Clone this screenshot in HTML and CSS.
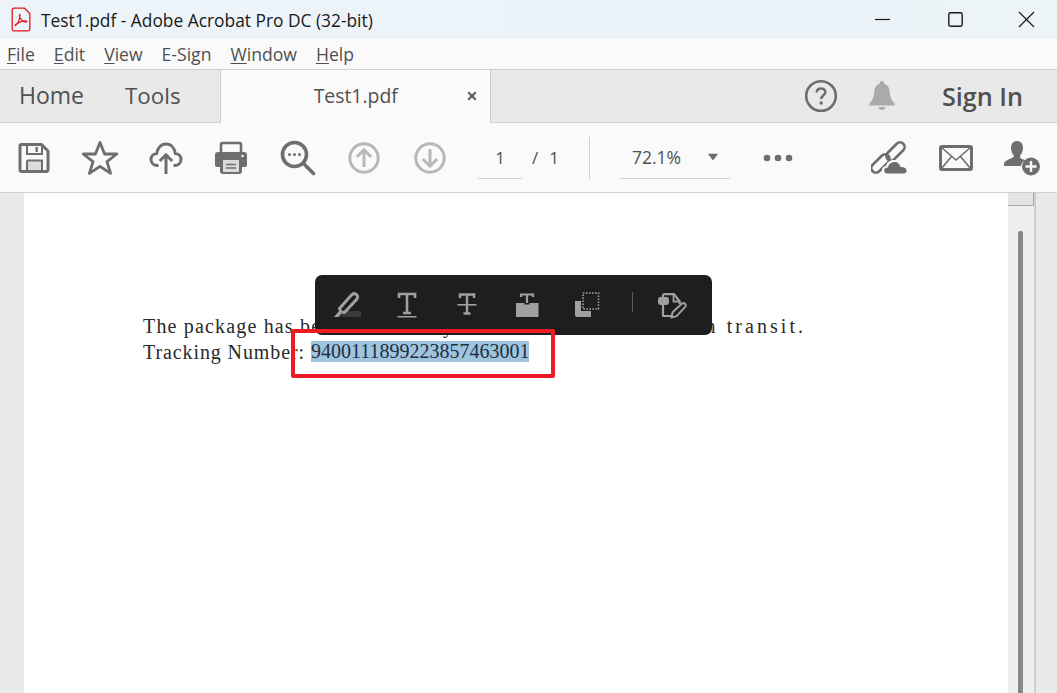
FILE: index.html
```html
<!DOCTYPE html>
<html lang="en">
<head>
<meta charset="utf-8">
<title>Test1.pdf - Adobe Acrobat Pro DC (32-bit)</title>
<link rel="stylesheet" href="styles.css">
</head>
<body>
<div class="app">
  <header class="titlebar">
    <svg class="pdf-icon" width="20" height="25" viewBox="0 0 20 25" fill="none" stroke="#e8141c">
      <path d="M3 1.2H13.5L18.8 6.5V22a1.8 1.8 0 0 1-1.8 1.8H3A1.8 1.8 0 0 1 1.2 22V3A1.8 1.8 0 0 1 3 1.2Z" stroke-width="1.3"/>
      <path d="M4.5 18.5C6.5 17 8.5 13 9 8.5C9.2 7 8.6 7 8.4 8.5C8.2 11 12 15.5 15.5 15C16.5 14.6 15.5 13.8 14 13.9C11 14.1 7.5 15.5 4.8 17.3C4 18 4.2 18.9 4.5 18.5Z" stroke-width="1.2"/>
    </svg>
    <span class="title">Test1.pdf - Adobe Acrobat Pro DC (32-bit)</span>
    <div class="winctl">
      <svg width="17" height="17" viewBox="0 0 17 17" class="w-min"><path d="M1 8.5H16" stroke="#1a1a1a" stroke-width="1.2"/></svg>
      <svg width="17" height="17" viewBox="0 0 17 17" class="w-max"><rect x="1.8" y="1.8" width="13.4" height="13.4" rx="1.6" fill="none" stroke="#1a1a1a" stroke-width="1.4"/></svg>
      <svg width="17" height="17" viewBox="0 0 17 17" class="w-close"><path d="M1 1L16 16M16 1L1 16" stroke="#1a1a1a" stroke-width="1.2"/></svg>
    </div>
  </header>

  <nav class="menubar">
    <span><u>F</u>ile</span>
    <span><u>E</u>dit</span>
    <span><u>V</u>iew</span>
    <span>E-Sign</span>
    <span><u>W</u>indow</span>
    <span><u>H</u>elp</span>
  </nav>

  <div class="tabbar">
    <span class="tab-link tab-home">Home</span>
    <span class="tab-link tab-tools">Tools</span>
    <div class="tab-active">
      <span class="tab-name">Test1.pdf</span>
      <svg class="tab-x" width="10" height="10" viewBox="0 0 10 10"><path d="M1.2 1.2L8.8 8.8M8.8 1.2L1.2 8.8" stroke="#555" stroke-width="2"/></svg>
    </div>
    <div class="tab-right">
      <svg width="34" height="34" viewBox="0 0 34 34" class="help">
        <circle cx="17" cy="17" r="14.8" fill="none" stroke="#6e6e6e" stroke-width="2.6"/>
        <path d="M12.6 13.4C12.8 10.6 14.8 9.4 17 9.4C19.6 9.4 21.4 11 21.4 13.2C21.4 16.2 17.2 16.4 17.2 20" fill="none" stroke="#6e6e6e" stroke-width="2.5"/>
        <circle cx="17.2" cy="24" r="1.7" fill="#6e6e6e"/>
      </svg>
      <svg width="28" height="32" viewBox="0 0 28 32" class="bell">
        <path d="M14 1C15.6 1 16.4 2.2 16.2 3.8C20.2 5 21.6 8.4 21.8 12.5C22 17.5 23.6 20.5 26.6 23.5V25.4H1.4V23.5C4.4 20.5 6 17.5 6.2 12.5C6.4 8.4 7.8 5 11.8 3.8C11.6 2.2 12.4 1 14 1Z" fill="#aaa"/>
        <path d="M10.5 27H17.5C17.2 29 15.8 30 14 30C12.2 30 10.8 29 10.5 27Z" fill="#aaa"/>
      </svg>
      <span class="signin">Sign In</span>
    </div>
  </div>

  <div class="toolbar">
    <div class="tool-group">
      <span class="tool"><svg width="32" height="32" viewBox="0 0 32 32">
        <path d="M3 2.5H23.5L30 9V28a1.5 1.5 0 0 1-1.5 1.5H3.5A1.5 1.5 0 0 1 2 28V3.5A1 1 0 0 1 3 2.5Z" fill="none" stroke="#6e6e6e" stroke-width="3"/>
        <rect x="9" y="19" width="15" height="9" fill="#dcdcdc"/>
        <path d="M9 18.5H24V29M9 18.5V29" fill="none" stroke="#6e6e6e" stroke-width="2"/>
        <path d="M9 3V12H24V3" fill="none" stroke="#6e6e6e" stroke-width="2"/>
        <rect x="17.5" y="5" width="2.4" height="5" fill="#6e6e6e"/>
      </svg></span>
      <span class="tool"><svg width="38" height="36" viewBox="0 0 38 36">
        <path d="M19 2.5L23.6 14H35.8L26 21.6L29.6 33.4L19 26.4L8.4 33.4L12 21.6L2.2 14H14.4Z" fill="none" stroke="#6e6e6e" stroke-width="2.8" stroke-linejoin="round"/>
      </svg></span>
      <span class="tool"><svg width="34" height="34" viewBox="0 0 34 34">
        <path d="M9.5 24.5H8.5C4.5 24.5 2 21.8 2 18.5C2 15 4.6 12.8 7.6 12.6C8.4 7.2 12 3 17 3C22 3 25.6 7 26.4 12.6C29.6 12.8 32 15.2 32 18.5C32 21.8 29.5 24.5 25.5 24.5H24.5" fill="none" stroke="#6e6e6e" stroke-width="3"/>
        <path d="M17 33V14M10.8 20L17 13.8L23.2 20" fill="none" stroke="#6e6e6e" stroke-width="3"/>
      </svg></span>
      <span class="tool tool-print"><svg width="34" height="34" viewBox="0 0 34 34">
        <path d="M7 12V3.5A1.5 1.5 0 0 1 8.5 2H25.5A1.5 1.5 0 0 1 27 3.5V12" fill="none" stroke="#6e6e6e" stroke-width="2.6"/>
        <path d="M4 11H30A3 3 0 0 1 33 14V24A2 2 0 0 1 31 26H28V30A3 3 0 0 1 25 33H9A3 3 0 0 1 6 30V26H3A2 2 0 0 1 1 24V14A3 3 0 0 1 4 11Z" fill="#6e6e6e"/>
        <rect x="9" y="19" width="16" height="12" fill="#dcdcdc"/>
        <path d="M12 23.5H22M12 27H22" stroke="#6e6e6e" stroke-width="1.4"/>
        <circle cx="28.5" cy="15" r="1.2" fill="#fafafa"/>
      </svg></span>
      <span class="tool"><svg width="36" height="36" viewBox="0 0 36 36">
        <circle cx="14.5" cy="14.5" r="12" fill="none" stroke="#6e6e6e" stroke-width="3.6"/>
        <path d="M23.5 23.5L33.5 33.5" stroke="#6e6e6e" stroke-width="3.6" stroke-linecap="round"/>
        <circle cx="9.5" cy="14.5" r="1.5" fill="#6e6e6e"/><circle cx="14.5" cy="14.5" r="1.5" fill="#6e6e6e"/><circle cx="19.5" cy="14.5" r="1.5" fill="#6e6e6e"/>
      </svg></span>
      <span class="tool"><svg width="32" height="32" viewBox="0 0 32 32">
        <circle cx="16" cy="16" r="14.2" fill="none" stroke="#b8b8b8" stroke-width="3"/>
        <path d="M16 25V8M8.8 15L16 7.8L23.2 15" fill="none" stroke="#b8b8b8" stroke-width="3"/>
      </svg></span>
      <span class="tool"><svg width="32" height="32" viewBox="0 0 32 32">
        <circle cx="16" cy="16" r="14.2" fill="none" stroke="#b8b8b8" stroke-width="3"/>
        <path d="M16 7V24M8.8 17L16 24.2L23.2 17" fill="none" stroke="#b8b8b8" stroke-width="3"/>
      </svg></span>
    </div>
    <div class="pager">
      <span class="page-input">1</span>
      <span class="page-slash">/</span>
      <span class="page-total">1</span>
    </div>
    <div class="tool-sep"></div>
    <div class="zoom">
      <span class="zoom-val">72.1%</span>
      <svg width="12" height="8" viewBox="0 0 12 8"><path d="M0.8 0.8H11.2L6 7.4Z" fill="#6e6e6e"/></svg>
    </div>
    <svg class="more" width="30" height="8" viewBox="0 0 30 8"><circle cx="4" cy="4" r="3.3" fill="#6e6e6e"/><circle cx="15" cy="4" r="3.3" fill="#6e6e6e"/><circle cx="26" cy="4" r="3.3" fill="#6e6e6e"/></svg>
    <div class="tool-right">
      <svg width="38" height="34" viewBox="0 0 38 34">
        <g fill="none" stroke="#6e6e6e" stroke-width="2.6">
          <rect x="-11" y="-4.6" width="22" height="9.2" rx="4.6" transform="translate(9.5 22.5) rotate(-45)"/>
          <rect x="-11" y="-4.6" width="22" height="9.2" rx="4.6" transform="translate(24.5 10.5) rotate(-45)"/>
        </g>
        <path d="M15 33C12.5 33 11 31.2 11 29C11 26.8 12.6 25.2 15 25C16 21.5 19 19 23 19C27 19 29.6 21.6 30.2 24.5C33.5 24.5 37 26 37 29.4C37 31.6 35.4 33 33 33Z" fill="#fafafa"/>
        <path d="M16 32.5C14 32.5 13.2 31 13.2 29.6C13.2 27.8 14.8 26.6 16.8 26.6C17.6 23.2 20.2 21 23.6 21C27 21 28.8 23 29.4 26C32.6 26 35.6 27 35.6 29.8C35.6 31.6 34.4 32.5 32.6 32.5Z" fill="#6e6e6e"/>
      </svg>
      <svg width="34" height="26" viewBox="0 0 34 26">
        <rect x="1.5" y="1.5" width="31" height="23" rx="1.5" fill="none" stroke="#6e6e6e" stroke-width="3"/>
        <path d="M2.5 2.5L17 15L31.5 2.5M2.5 23.5L12.5 11.5M31.5 23.5L21.5 11.5" fill="none" stroke="#6e6e6e" stroke-width="1.6"/>
      </svg>
      <svg width="38" height="36" viewBox="0 0 38 36">
        <path d="M14 1C18 1 20 4.2 20 8C20 11.5 18.5 14.2 17.2 15.5V18C19 19 20.5 19.5 22 20.2C19.5 21.6 18.2 24 18 26H1V24C1 21.5 4 20 8.2 18.2L10.8 17V15.5C9.5 14.2 8 11.5 8 8C8 4.2 10 1 14 1Z" fill="#6e6e6e"/>
        <circle cx="28" cy="26.5" r="9" fill="#6e6e6e"/>
        <path d="M28 21V32M22.5 26.5H33.5" stroke="#fafafa" stroke-width="2.4"/>
      </svg>
    </div>
  </div>

  <main class="viewer">
    <div class="gutter"></div>
    <div class="page">
      <p class="line"><span class="head">The package has been received by the carrier and is now </span><span class="tail">in transit.</span></p>
      <p class="line">Tracking Number: <span class="sel">9400111899223857463001</span></p>

      <div class="popup">
        <span class="pop-slot"><svg width="28" height="28" viewBox="0 0 28 28">
          <rect x="9" y="20" width="19" height="6" fill="#3a3a3a"/>
          <path d="M6.5 17.5L18.5 4C20 2.4 22 2.4 23.5 3.6C25 5 25 7 23.6 8.4L11.5 21.5L8 21Z" fill="none" stroke="#a0a0a0" stroke-width="3"/>
          <path d="M6 20L8.5 23L5.5 26H1Z" fill="#a0a0a0"/>
        </svg></span>
        <span class="pop-slot"><svg width="22" height="26" viewBox="0 0 22 26">
          <path d="M3 6V2H19V6M11 2V21M7 21H15" fill="none" stroke="#a0a0a0" stroke-width="2.6"/>
          <rect x="1.5" y="24" width="19" height="1.5" fill="#a0a0a0"/>
        </svg></span>
        <span class="pop-slot"><svg width="22" height="24" viewBox="0 0 22 24">
          <path d="M4 5V1.5H18V5M11 1.5V20M7.5 20.5H14.5" fill="none" stroke="#a0a0a0" stroke-width="2.4"/>
          <rect x="1.5" y="11" width="19" height="1.6" fill="#a0a0a0"/>
        </svg></span>
        <span class="pop-slot"><svg width="24" height="24" viewBox="0 0 24 24">
          <path d="M6 4V1.5H18V4M12 1.5V10" fill="none" stroke="#a0a0a0" stroke-width="2.2"/>
          <path d="M1 10H9.5V11.5H14.5V10H23.5V24H1Z" fill="#a0a0a0"/>
        </svg></span>
        <span class="pop-slot"><svg width="26" height="26" viewBox="0 0 26 26">
          <path d="M1 9H7V19H17V25H3A2 2 0 0 1 1 23Z" fill="#a0a0a0"/>
          <rect x="9" y="1" width="15.5" height="16" fill="none" stroke="#a0a0a0" stroke-width="1.6" stroke-dasharray="1.6 1.4"/>
        </svg></span>
        <span class="pop-sep"></span>
        <span class="pop-slot pop-last"><svg width="30" height="28" viewBox="0 0 30 28">
          <path d="M6 6V4.5A1.5 1.5 0 0 1 7.5 3.2H17L22.7 10.5V13" fill="none" stroke="#a0a0a0" stroke-width="2.2"/>
          <path d="M16.5 3.5V10.5H22.5" fill="none" stroke="#a0a0a0" stroke-width="1.8"/>
          <rect x="1" y="6" width="11" height="8" rx="2.4" fill="#a0a0a0"/>
          <path d="M6 14V25H14" fill="none" stroke="#a0a0a0" stroke-width="2.2"/>
          <path d="M14.5 26.5L15.6 21.2L24.5 13C26 11.6 28 12 28.6 13.4C29 14.6 28.6 15.6 27.6 16.6L19.5 25.2Z" fill="none" stroke="#a0a0a0" stroke-width="2"/>
        </svg></span>
      </div>
      <div class="callout"></div>
    </div>
    <div class="scrollbar">
      <div class="scroll-cap"></div>
      <div class="scroll-track"><div class="scroll-thumb"></div></div>
    </div>
    <div class="gutter gutter-right"></div>
  </main>
</div>
</body>
</html>
```
FILE: styles.css
```css
* { box-sizing: border-box; }
html, body { margin: 0; height: 100%; overflow: hidden; }
body { font-family: "Open Sans", "Noto Sans", sans-serif; background: #e9e9e9; color: #444; }
svg { display: block; flex: none; }

.app { display: flex; flex-direction: column; height: 693px; }

.titlebar { height: 39px; flex: none; display: flex; align-items: center; padding-left: 11px; background: linear-gradient(90deg, #edf4f9, #ebf3f9 70%, #ecf4f8); }
.pdf-icon { margin-right: 10px; }
.title { font-size: 17.35px; color: #1a1a1a; white-space: nowrap; }
.winctl { margin-left: auto; display: flex; align-items: center; padding-right: 22px; }
.w-min { margin-right: 56px; }
.w-max { margin-right: 54px; }

.menubar { height: 31px; flex: none; display: flex; align-items: center; gap: 19px; padding: 0 0 0 7px; background: #fafafa; border-bottom: 1px solid #cfcfcf; font-size: 17.6px; color: #505050; }
.menubar u { text-underline-offset: 2px; }

.tabbar { height: 53px; flex: none; display: flex; align-items: stretch; background: #e9e9e9; border-bottom: 1px solid #cfcfcf; }
.tab-link { font-size: 23px; line-height: 51px; color: #505050; }
.tab-home { margin-left: 19px; }
.tab-tools { margin-left: 41px; font-size: 22.4px; }
.tab-active { margin-left: 39px; width: 271px; height: 53px; display: flex; align-items: center; background: #fafafa; border-left: 1px solid #cfcfcf; border-right: 1px solid #cfcfcf; padding-bottom: 2px; }
.tab-name { margin-left: 93px; font-size: 19.4px; color: #505050; }
.tab-x { margin-left: 69px; }
.tab-right { margin-left: auto; display: flex; align-items: center; padding-right: 34px; }
.help { margin-right: 30px; }
.bell { margin-right: 46px; }
.signin { font-size: 25.2px; font-weight: 600; color: #505050; }

.toolbar { height: 70px; flex: none; display: flex; align-items: center; background: #fafafa; border-bottom: 1px solid #cfcfcf; }
.tool-group { display: flex; margin-left: 1px; }
.tool { width: 66px; display: flex; justify-content: center; align-items: center; }
.tool-print { padding-right: 3px; }
.pager { display: flex; align-items: center; margin-left: 15px; font-size: 17px; color: #505050; }
.page-input { width: 44px; height: 42px; line-height: 42px; text-align: center; border-bottom: 1px solid #cfcfcf; }
.page-slash { margin-left: 10px; }
.page-total { margin-left: 11px; }
.tool-sep { width: 1px; height: 42px; margin-left: 30px; background: #cfcfcf; }
.zoom { width: 110px; height: 42px; margin-left: 30px; display: flex; align-items: center; padding-left: 12px; border-bottom: 1px solid #cfcfcf; font-size: 17.5px; color: #505050; }
.zoom-val { width: 75px; }
.more { margin-left: 33px; }
.tool-right { margin-left: auto; display: flex; align-items: center; padding-right: 16px; gap: 30px; }

.viewer { flex: 1; min-height: 0; display: flex; background: #fff; }
.gutter { width: 24px; background: #e9e9e9; flex: none; }
.gutter-right { width: 22px; border-left: 1px solid #cfcfcf; }
.page { flex: 1; position: relative; background: #fff; padding: 120px 0 0 119px; }
.line { margin: 0; height: 26px; line-height: 26px; font-family: "Liberation Serif", serif; font-size: 20px; letter-spacing: 0.9px; color: #2a2a2a; white-space: pre; }
.head { display: inline-block; width: 554px; overflow: hidden; letter-spacing: 1.17px; vertical-align: bottom; }
.tail { letter-spacing: 3.05px; }
.sel { display: inline-block; height: 21px; line-height: 21px; letter-spacing: 0; vertical-align: 1px; background: #9ec4de; color: #1f2f45; }

.popup { position: absolute; left: 291px; top: 82px; width: 397px; height: 60px; display: flex; align-items: center; padding-left: 2px; background: #1e1e1e; border-radius: 7px; }
.pop-slot { width: 60px; display: flex; justify-content: center; align-items: center; }
.pop-sep { width: 1px; height: 20px; margin: 0 0 6px 15px; background: #5a5a5a; }
.pop-last { width: 78px; }

.callout { position: absolute; left: 267px; top: 136px; width: 264px; height: 49px; border: 4px solid #ed1c24; border-radius: 2px; }

.scrollbar { width: 27px; flex: none; background: #efefef; border-right: 1px solid #cfcfcf; display: flex; flex-direction: column; }
.scroll-cap { height: 13px; flex: none; background: #e4e4e4; border-bottom: 1px solid #aaa; border-right: 1px solid #aaa; }
.scroll-track { flex: 1; display: flex; justify-content: center; padding: 25px 2px 0 0; }
.scroll-thumb { width: 5px; height: 100%; background: #888; border-radius: 2px 2px 0 0; }
```
